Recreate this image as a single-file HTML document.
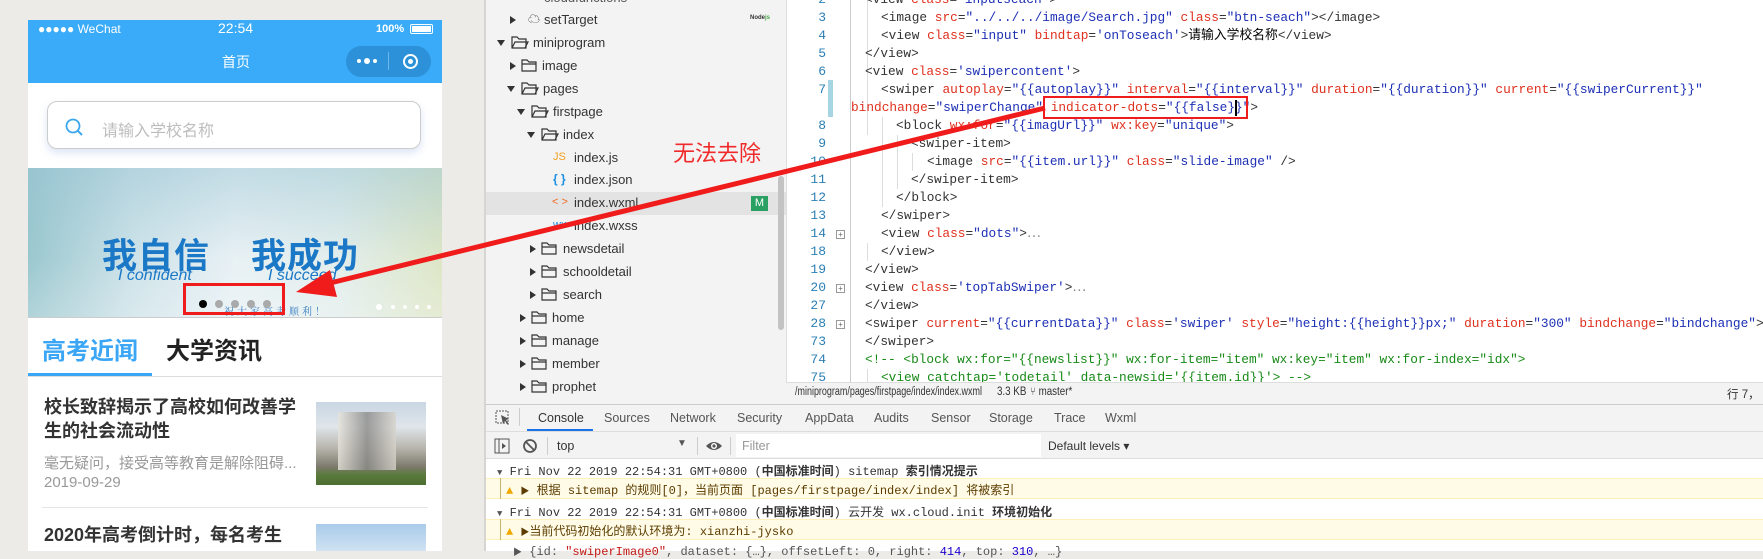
<!DOCTYPE html>
<html><head><meta charset="utf-8"><style>
*{margin:0;padding:0;box-sizing:border-box}
body{width:1763px;height:551px;overflow:hidden;background:#ecebe7;position:relative;font-family:"Liberation Sans","Noto Sans CJK SC",sans-serif}
.a{position:absolute;white-space:nowrap}
.mono{font-family:"Liberation Mono","Noto Sans CJK SC",monospace}
.code{font-size:12.8px;line-height:18px;color:#333}
.at{color:#e0301e}.v{color:#1c2fb5}.cm{color:#178a17}
.ln{position:absolute;width:30px;text-align:right;left:796px;color:#2b7fb5;font-family:"Liberation Mono",monospace;font-size:13px;line-height:18px}
.tree{font-size:13px;color:#333;line-height:21px}
.tri{position:absolute;width:0;height:0}
.tr{border-top:4px solid transparent;border-bottom:4px solid transparent;border-left:6px solid #333}
.td{border-left:4px solid transparent;border-right:4px solid transparent;border-top:6px solid #333}
.fold{position:absolute;left:836px;width:9px;height:9px;border:1px solid #999;font-size:8px;line-height:7px;text-align:center;color:#666;background:#fff}
.tab{position:absolute;top:411px;font-size:12.5px;color:#555}
.con{font-family:"Liberation Mono","Noto Sans CJK SC",monospace;font-size:12px;color:#333}
</style></head><body>

<!-- phone -->
<div class="a" style="left:28px;top:20px;width:414px;height:531px;background:#fff"></div>
<div class="a" style="left:28px;top:20px;width:414px;height:63px;background:#3aabf8"></div>
<div class="a" style="left:38px;top:22px;color:#fff;font-size:12px">●●●●● WeChat</div>
<div class="a" style="left:218px;top:20px;color:#fff;font-size:14px">22:54</div>
<div class="a" style="left:376px;top:23px;color:#fff;font-size:11px;font-weight:bold">100%</div>
<div class="a" style="left:410px;top:24px;width:23px;height:10px;border:1.5px solid #fff;border-radius:2px;padding:1px"><div style="background:#fff;width:100%;height:100%"></div></div>
<div class="a" style="left:222px;top:52px;color:#fff;font-size:14px">首页</div>
<div class="a" style="left:346px;top:46px;width:85px;height:31px;border-radius:16px;background:#2c91d8"></div>
<div class="a" style="left:357px;top:59px;width:4px;height:4px;border-radius:2px;background:#fff"></div>
<div class="a" style="left:364px;top:58px;width:6px;height:6px;border-radius:3px;background:#fff"></div>
<div class="a" style="left:373px;top:59px;width:4px;height:4px;border-radius:2px;background:#fff"></div>
<div class="a" style="left:388px;top:52px;width:1px;height:18px;background:#6bb8ec"></div>
<div class="a" style="left:403px;top:54px;width:15px;height:15px;border-radius:50%;border:2px solid #fff"></div>
<div class="a" style="left:408px;top:59px;width:5px;height:5px;border-radius:50%;background:#fff"></div>

<div class="a" style="left:47px;top:101px;width:374px;height:48px;border:1px solid #ccc;border-radius:10px;box-shadow:0 4px 8px rgba(120,150,220,.25)"></div>
<svg class="a" style="left:65px;top:118px" width="20" height="20" viewBox="0 0 20 20"><circle cx="8" cy="8" r="6.5" fill="none" stroke="#3aa6ee" stroke-width="1.8"/><line x1="12.7" y1="12.7" x2="17" y2="17" stroke="#3aa6ee" stroke-width="2"/></svg>
<div class="a" style="left:102px;top:117px;color:#bdbdbd;font-size:16px">请输入学校名称</div>

<div class="a" style="left:28px;top:168px;width:414px;height:150px;background:linear-gradient(90deg,#8fc1c9 0%,#c7dfe6 25%,#e5eff3 50%,#dfecea 75%,#d9e3c0 100%)"></div>
<div class="a" style="left:28px;top:168px;width:414px;height:150px;background:linear-gradient(180deg,rgba(160,200,215,.5),rgba(255,255,255,.1) 60%,rgba(255,255,255,.3))"></div>
<div class="a" style="left:28px;top:317px;width:414px;height:1px;background:#ccc"></div>
<div class="a" style="left:102px;top:228px;color:#1b78c6;font-size:35px;font-weight:bold;letter-spacing:1px">我自信</div>
<div class="a" style="left:251px;top:228px;color:#1b78c6;font-size:35px;font-weight:bold;letter-spacing:1px">我成功</div>
<div class="a" style="left:118px;top:267px;color:#1b78c6;font-size:16px;font-style:italic">I confident</div>
<div class="a" style="left:268px;top:267px;color:#1b78c6;font-size:16px;font-style:italic">I succeed</div>
<div class="a" style="left:224px;top:303px;color:#3a7fc0;font-size:10px;letter-spacing:3px;font-family:'Noto Serif CJK SC',serif">祝大家高考顺利！</div>
<div class="a" style="left:199px;top:300px;width:8px;height:8px;border-radius:50%;background:#000"></div>
<div class="a" style="left:215px;top:300px;width:8px;height:8px;border-radius:50%;background:#aaa"></div>
<div class="a" style="left:231px;top:300px;width:8px;height:8px;border-radius:50%;background:#aaa"></div>
<div class="a" style="left:247px;top:300px;width:8px;height:8px;border-radius:50%;background:#aaa"></div>
<div class="a" style="left:263px;top:300px;width:8px;height:8px;border-radius:50%;background:#aaa"></div>
<div class="a" style="left:376px;top:304px;width:6px;height:6px;border-radius:50%;background:#fff"></div>
<div class="a" style="left:391px;top:305px;width:4px;height:4px;border-radius:50%;background:#fff"></div>
<div class="a" style="left:403px;top:305px;width:4px;height:4px;border-radius:50%;background:#fff"></div>
<div class="a" style="left:415px;top:305px;width:4px;height:4px;border-radius:50%;background:#fff"></div>
<div class="a" style="left:427px;top:305px;width:4px;height:4px;border-radius:50%;background:#fff"></div>
<div class="a" style="left:183px;top:283px;width:102px;height:32px;border:3px solid #f01c1c"></div>

<div class="a" style="left:42px;top:331px;color:#3aa6f5;font-size:24px;font-weight:bold">高考近闻</div>
<div class="a" style="left:166px;top:331px;color:#222;font-size:24px;font-weight:bold">大学资讯</div>
<div class="a" style="left:28px;top:373px;width:124px;height:3px;background:#3aa6f5"></div>
<div class="a" style="left:28px;top:376px;width:414px;height:1px;background:#ddd"></div>
<div class="a" style="left:44px;top:395px;color:#333;font-size:18px;font-weight:bold;line-height:24px">校长致辞揭示了高校如何改善学<br>生的社会流动性</div>
<div class="a" style="left:44px;top:452px;color:#999;font-size:15px">毫无疑问，接受高等教育是解除阻碍...</div>
<div class="a" style="left:44px;top:474px;color:#999;font-size:15px">2019-09-29</div>
<div class="a" style="left:316px;top:402px;width:110px;height:83px;background:linear-gradient(180deg,#c9d6e3 0%,#dfe5ea 30%,#b9b6ae 55%,#7d7a6d 78%,#5a7a3c 88%,#4d6e32 100%)"></div>
<div class="a" style="left:338px;top:412px;width:58px;height:58px;background:linear-gradient(90deg,#e8e4dc,#8a8a88 50%,#d8d4cc);opacity:.8"></div>
<div class="a" style="left:42px;top:507px;width:386px;height:1px;background:#e5e5e5"></div>
<div class="a" style="left:44px;top:521px;color:#333;font-size:18px;font-weight:bold">2020年高考倒计时，每名考生</div>
<div class="a" style="left:316px;top:524px;width:110px;height:27px;background:linear-gradient(180deg,#a9cbea,#cfe2f2)"></div>

<div class="a" style="left:442px;top:0;width:44px;height:551px;background:#ecebe7"></div>
<div class="a" style="left:484px;top:0;width:2px;height:551px;background:#d6d5d1"></div>

<!-- tree -->
<div class="a" style="left:486px;top:0;width:300px;height:404px;background:#f3f3f3"></div>
<div class="a" style="left:486px;top:192px;width:300px;height:23px;background:#e3e3e3"></div>
<div class="a" style="left:778px;top:176px;width:6px;height:154px;border-radius:3px;background:#c3c3c3"></div>
<div class="a tree" style="left:544px;top:-13px;color:#555">cloudfunctions</div>
<div class="tri tr" style="left:510px;top:16px"></div><div class="a tree" style="left:528px;top:9px;font-size:12px">☁</div><div class="a tree" style="left:544px;top:9px">setTarget</div>
<div class="a" style="left:750px;top:15px;font-size:6px;color:#333;font-weight:bold">Node<span style="color:#4a4">js</span></div>
<div class="tri td" style="left:497px;top:40px"></div><div class="a tree" style="left:533px;top:32px">miniprogram</div>
<div class="tri tr" style="left:510px;top:62px"></div><div class="a tree" style="left:542px;top:55px">image</div>
<div class="tri td" style="left:507px;top:86px"></div><div class="a tree" style="left:543px;top:78px">pages</div>
<div class="tri td" style="left:517px;top:109px"></div><div class="a tree" style="left:553px;top:101px">firstpage</div>
<div class="tri td" style="left:527px;top:132px"></div><div class="a tree" style="left:563px;top:124px">index</div>
<div class="a tree" style="left:553px;top:147px;color:#f0a020;font-size:11px">JS</div><div class="a tree" style="left:574px;top:147px">index.js</div>
<div class="a tree" style="left:553px;top:169px;color:#1a8ee0;font-size:12px;font-weight:bold">{ }</div><div class="a tree" style="left:574px;top:169px">index.json</div>
<div class="a tree" style="left:552px;top:192px;color:#f06a20;font-size:11px">&lt; &gt;</div><div class="a tree" style="left:574px;top:192px">index.wxml</div>
<div class="a" style="left:751px;top:196px;width:17px;height:15px;background:#2aa163;color:#fff;font-size:11px;text-align:center;line-height:15px">M</div>
<div class="a tree" style="left:553px;top:215px;color:#1a8ee0;font-size:11px">wx</div><div class="a tree" style="left:574px;top:215px">index.wxss</div>
<div class="tri tr" style="left:530px;top:245px"></div><div class="a tree" style="left:563px;top:238px">newsdetail</div>
<div class="tri tr" style="left:530px;top:268px"></div><div class="a tree" style="left:563px;top:261px">schooldetail</div>
<div class="tri tr" style="left:530px;top:291px"></div><div class="a tree" style="left:563px;top:284px">search</div>
<div class="tri tr" style="left:520px;top:314px"></div><div class="a tree" style="left:552px;top:307px">home</div>
<div class="tri tr" style="left:520px;top:337px"></div><div class="a tree" style="left:552px;top:330px">manage</div>
<div class="tri tr" style="left:520px;top:360px"></div><div class="a tree" style="left:552px;top:353px">member</div>
<div class="tri tr" style="left:520px;top:383px"></div><div class="a tree" style="left:552px;top:376px">prophet</div>
<svg class="a" style="left:0;top:0" width="786" height="404">
<defs>
<path id="fo" d="M0 0h5l2 2h7v9h-14z M0 11l3-6h13l-3 6" fill="none" stroke="#333" stroke-width="1.2"/>
<path id="fc" d="M0 0h5l2 2h7v9h-14z M0 4h14" fill="none" stroke="#333" stroke-width="1.2"/>
</defs>
<use href="#fo" x="512" y="37"/>
<use href="#fc" x="522" y="60"/>
<use href="#fo" x="522" y="83"/>
<use href="#fo" x="532" y="106"/>
<use href="#fo" x="542" y="129"/>
<use href="#fc" x="542" y="243"/>
<use href="#fc" x="542" y="266"/>
<use href="#fc" x="542" y="289"/>
<use href="#fc" x="532" y="312"/>
<use href="#fc" x="532" y="335"/>
<use href="#fc" x="532" y="358"/>
<use href="#fc" x="532" y="381"/>
</svg>

<!-- code -->
<div class="a" style="left:786px;top:0;width:977px;height:382px;background:#fff;border-left:1px solid #ddd"></div>
<div class="a" style="left:828px;top:80px;width:5px;height:37px;background:#a8d5e4"></div>
<div class="a" style="left:850px;top:0;width:1px;height:382px;background:#ccc"></div>
<div class="a" style="left:867px;top:0;width:1px;height:135px;background:#ddd"></div>
<div class="a" style="left:867px;top:243px;width:1px;height:18px;background:#ddd"></div>
<div class="a" style="left:882px;top:117px;width:1px;height:90px;background:#ddd"></div>
<div class="a" style="left:897px;top:135px;width:1px;height:54px;background:#ddd"></div>
<div class="a" style="left:912px;top:153px;width:1px;height:18px;background:#ddd"></div>
<div class="a" style="left:867px;top:369px;width:1px;height:18px;background:#ddd"></div>
<div class="ln" style="top:-9px">2</div><div class="ln" style="top:9px">3</div><div class="ln" style="top:27px">4</div><div class="ln" style="top:45px">5</div><div class="ln" style="top:63px">6</div><div class="ln" style="top:81px">7</div><div class="ln" style="top:117px">8</div><div class="ln" style="top:135px">9</div><div class="ln" style="top:153px">10</div><div class="ln" style="top:171px">11</div><div class="ln" style="top:189px">12</div><div class="ln" style="top:207px">13</div><div class="ln" style="top:225px">14</div><div class="ln" style="top:243px">18</div><div class="ln" style="top:261px">19</div><div class="ln" style="top:279px">20</div><div class="ln" style="top:297px">27</div><div class="ln" style="top:315px">28</div><div class="ln" style="top:333px">73</div><div class="ln" style="top:351px">74</div><div class="ln" style="top:369px">75</div>
<div class="fold" style="top:230px">+</div><div class="fold" style="top:284px">+</div><div class="fold" style="top:320px">+</div>
<div class="a mono code" style="left:865px;top:-9px">&lt;view <span class="at">class</span>=<span class="v">"inputseach"</span>&gt;</div>
<div class="a mono code" style="left:881px;top:9px">&lt;image <span class="at">src</span>=<span class="v">"../../../image/Search.jpg"</span> <span class="at">class</span>=<span class="v">"btn-seach"</span>&gt;&lt;/image&gt;</div>
<div class="a mono code" style="left:881px;top:27px">&lt;view <span class="at">class</span>=<span class="v">"input"</span> <span class="at">bindtap</span>=<span class="v">'onToseach'</span>&gt;<span style="color:#000">请输入学校名称</span>&lt;/view&gt;</div>
<div class="a mono code" style="left:865px;top:45px">&lt;/view&gt;</div>
<div class="a mono code" style="left:865px;top:63px">&lt;view <span class="at">class</span>=<span class="v">'swipercontent'</span>&gt;</div>
<div class="a mono code" style="left:881px;top:81px">&lt;swiper <span class="at">autoplay</span>=<span class="v">"{{autoplay}}"</span> <span class="at">interval</span>=<span class="v">"{{interval}}"</span> <span class="at">duration</span>=<span class="v">"{{duration}}"</span> <span class="at">current</span>=<span class="v">"{{swiperCurrent}}"</span></div>
<div class="a mono code" style="left:851px;top:99px"><span class="at">bindchange</span>=<span class="v">"swiperChange"</span> <span class="at">indicator-dots</span>=<span class="v">"{{false}}"</span>&gt;</div>
<div class="a" style="left:1235px;top:100px;width:1.5px;height:16px;background:#000"></div>
<div class="a" style="left:1043px;top:96px;width:205px;height:23px;border:2.5px solid #f01c1c"></div>
<div class="a mono code" style="left:896px;top:117px">&lt;block <span class="at">wx:for</span>=<span class="v">"{{imagUrl}}"</span> <span class="at">wx:key</span>=<span class="v">"unique"</span>&gt;</div>
<div class="a mono code" style="left:911px;top:135px">&lt;swiper-item&gt;</div>
<div class="a mono code" style="left:927px;top:153px">&lt;image <span class="at">src</span>=<span class="v">"{{item.url}}"</span> <span class="at">class</span>=<span class="v">"slide-image"</span> /&gt;</div>
<div class="a mono code" style="left:911px;top:171px">&lt;/swiper-item&gt;</div>
<div class="a mono code" style="left:896px;top:189px">&lt;/block&gt;</div>
<div class="a mono code" style="left:881px;top:207px">&lt;/swiper&gt;</div>
<div class="a mono code" style="left:881px;top:225px">&lt;view <span class="at">class</span>=<span class="v">"dots"</span>&gt;<span style="color:#888">⋯</span></div>
<div class="a mono code" style="left:881px;top:243px">&lt;/view&gt;</div>
<div class="a mono code" style="left:865px;top:261px">&lt;/view&gt;</div>
<div class="a mono code" style="left:865px;top:279px">&lt;view <span class="at">class</span>=<span class="v">'topTabSwiper'</span>&gt;<span style="color:#888">⋯</span></div>
<div class="a mono code" style="left:865px;top:297px">&lt;/view&gt;</div>
<div class="a mono code" style="left:865px;top:315px">&lt;swiper <span class="at">current</span>=<span class="v">"{{currentData}}"</span> <span class="at">class</span>=<span class="v">'swiper'</span> <span class="at">style</span>=<span class="v">"height:{{height}}px;"</span> <span class="at">duration</span>=<span class="v">"300"</span> <span class="at">bindchange</span>=<span class="v">"bindchange"</span>&gt;</div>
<div class="a mono code" style="left:865px;top:333px">&lt;/swiper&gt;</div>
<div class="a mono code cm" style="left:865px;top:351px">&lt;!-- &lt;block wx:for="{{newslist}}" wx:for-item="item" wx:key="item" wx:for-index="idx"&gt;</div>
<div class="a mono code cm" style="left:881px;top:369px">&lt;view catchtap='todetail' data-newsid='{{item.id}}'&gt; --&gt;</div>

<!-- status bar -->
<div class="a" style="left:786px;top:382px;width:977px;height:22px;background:#f3f3f3;border-top:1px solid #ddd"></div>
<div class="a" style="left:795px;top:386px;font-size:11.5px;color:#333;transform:scaleX(.78);transform-origin:left">/miniprogram/pages/firstpage/index/index.wxml</div>
<div class="a" style="left:997px;top:386px;font-size:11.5px;color:#333;transform:scaleX(.85);transform-origin:left">3.3 KB</div>
<div class="a" style="left:1030px;top:386px;font-size:11.5px;color:#333;transform:scaleX(.85);transform-origin:left">⑂ master*</div>
<div class="a" style="left:1727px;top:386px;font-size:11.5px;color:#333">行 7，</div>

<!-- devtools -->
<div class="a" style="left:486px;top:404px;width:1277px;height:147px;background:#fff"></div>
<div class="a" style="left:486px;top:404px;width:1277px;height:28px;background:#f3f3f3;border-top:1px solid #ccc;border-bottom:1px solid #ddd"></div>
<svg class="a" style="left:495px;top:410px" width="16" height="16"><rect x="1" y="1" width="12" height="12" fill="none" stroke="#555" stroke-dasharray="2 1"/><path d="M6 5l8 4-3 1 3 4-1 1-3-4-2 3z" fill="#555"/></svg>
<div class="a" style="left:519px;top:408px;width:1px;height:18px;background:#ccc"></div>
<div class="tab" style="left:538px;color:#333">Console</div>
<div class="a" style="left:527px;top:429px;width:66px;height:2px;background:#1a73e8"></div>
<div class="tab" style="left:604px">Sources</div><div class="tab" style="left:670px">Network</div><div class="tab" style="left:737px">Security</div><div class="tab" style="left:805px">AppData</div><div class="tab" style="left:874px">Audits</div><div class="tab" style="left:931px">Sensor</div><div class="tab" style="left:989px">Storage</div><div class="tab" style="left:1054px">Trace</div><div class="tab" style="left:1105px">Wxml</div>
<div class="a" style="left:486px;top:432px;width:1277px;height:27px;background:#f3f3f3;border-bottom:1px solid #ddd"></div>
<svg class="a" style="left:494px;top:438px" width="16" height="16"><rect x="1" y="1" width="14" height="14" fill="none" stroke="#555"/><line x1="5" y1="1" x2="5" y2="15" stroke="#555"/><path d="M8 5l4 3-4 3z" fill="#555"/></svg>
<svg class="a" style="left:522px;top:438px" width="16" height="16"><circle cx="8" cy="8" r="6" fill="none" stroke="#555" stroke-width="1.8"/><line x1="4" y1="4" x2="12" y2="12" stroke="#555" stroke-width="1.8"/></svg>
<div class="a" style="left:547px;top:437px;width:1px;height:18px;background:#ccc"></div>
<div class="a" style="left:557px;top:439px;font-size:12.5px;color:#333">top</div>
<div class="a" style="left:677px;top:438px;font-size:10px;color:#555">▼</div>
<div class="a" style="left:697px;top:437px;width:1px;height:18px;background:#ccc"></div>
<svg class="a" style="left:705px;top:438px" width="18" height="16"><path d="M1 8q8-8 16 0q-8 8-16 0z" fill="#555"/><circle cx="9" cy="8" r="3" fill="#fff"/><circle cx="9" cy="8" r="1.6" fill="#555"/></svg>
<div class="a" style="left:730px;top:437px;width:1px;height:18px;background:#ccc"></div>
<div class="a" style="left:736px;top:434px;width:305px;height:23px;background:#fff"></div>
<div class="a" style="left:742px;top:439px;font-size:12.5px;color:#999">Filter</div>
<div class="a" style="left:1048px;top:439px;font-size:12px;color:#333">Default levels ▾</div>

<div class="a con" style="left:497px;top:462px"><span style="font-size:9px;color:#555">▼</span> Fri Nov 22 2019 22:54:31 GMT+0800 (<b>中国标准时间</b>) sitemap <b>索引情况提示</b></div>
<div class="a" style="left:486px;top:478px;width:1277px;height:21px;background:#fffbe6;border-top:1px solid #fff1b8;border-bottom:1px solid #fff1b8"></div>
<div class="a" style="left:500px;top:478px;width:1px;height:21px;background:#c9b66e"></div>
<div class="a con" style="left:506px;top:481px;color:#5c3c00"><span style="color:#f0a800">▲</span> <span style="font-size:9px">▶</span> 根据 sitemap 的规则[0]，当前页面 [pages/firstpage/index/index] 将被索引</div>
<div class="a con" style="left:497px;top:503px"><span style="font-size:9px;color:#555">▼</span> Fri Nov 22 2019 22:54:31 GMT+0800 (<b>中国标准时间</b>) 云开发 wx.cloud.init <b>环境初始化</b></div>
<div class="a" style="left:486px;top:519px;width:1277px;height:21px;background:#fffbe6;border-top:1px solid #fff1b8;border-bottom:1px solid #fff1b8"></div>
<div class="a" style="left:500px;top:519px;width:1px;height:21px;background:#c9b66e"></div>
<div class="a con" style="left:506px;top:522px;color:#5c3c00"><span style="color:#f0a800">▲</span> <span style="font-size:9px">▶</span>当前代码初始化的默认环境为: xianzhi-jysko</div>
<div class="a con" style="left:513px;top:545px;color:#555"><span style="font-size:9px">▶</span> {id: <span style="color:#c41a16">"swiperImage0"</span>, dataset: {…}, offsetLeft: 0, right: <span style="color:#1c00cf">414</span>, top: <span style="color:#1c00cf">310</span>, …}</div>

<!-- annotation -->
<div class="a" style="left:673px;top:136px;color:#f02a2a;font-size:22px">无法去除</div>
<svg class="a" style="left:0;top:0" width="1763" height="551">
<line x1="1045" y1="108" x2="322" y2="285" stroke="#f01c1c" stroke-width="5"/>
<path d="M296 292L330 270L337 297z" fill="#f01c1c"/>
</svg>
</body></html>
